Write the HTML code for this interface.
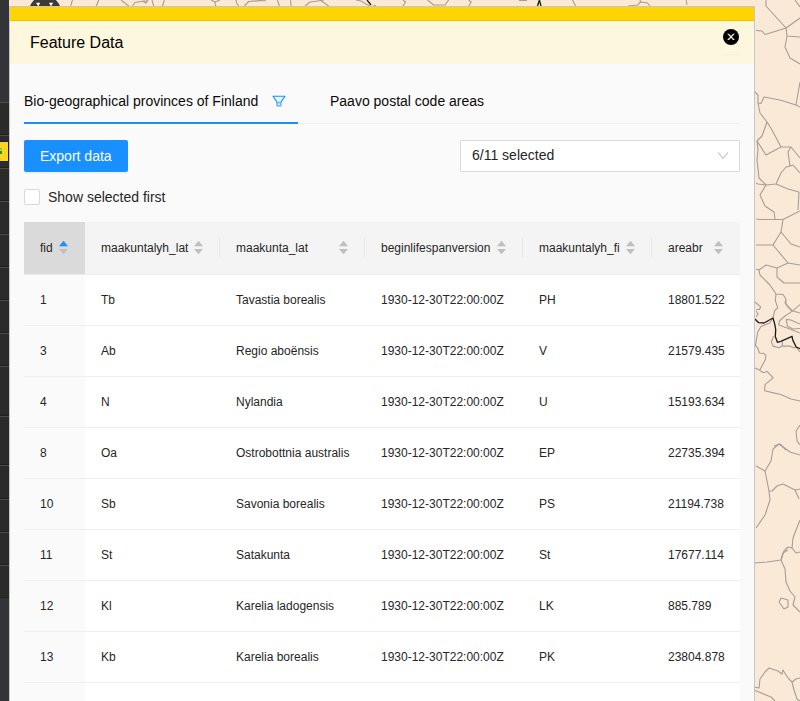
<!DOCTYPE html>
<html><head><meta charset="utf-8">
<style>
*{margin:0;padding:0;box-sizing:border-box}
html,body{width:800px;height:701px;overflow:hidden;background:#fae9d7;font-family:"Liberation Sans",sans-serif;color:#262626}
.a{position:absolute}
.t{position:absolute;white-space:nowrap;line-height:20px}
.f14{font-size:14px;color:#0a0a0a}
.f12{font-size:12px}
.dv{position:absolute;width:1px;height:19px;top:238px;background:#e6e6e6}
.hl{position:absolute;left:24px;width:716px;height:1px;background:#efefef}
</style></head><body>
<svg class="a" style="left:0;top:0" width="800" height="701" viewBox="0 0 800 701"><g fill="none" stroke="#a69e94" stroke-width="1.1" stroke-linejoin="round"><polyline points="766,0 766,6 786,28 800,18"/><polyline points="786,28 770,33 765,34.5 762,31 756,30.5"/><polyline points="786,28 787,36 800,37"/><polyline points="787,36 785,47 790,58 800,64"/><polyline points="795,0 800,7"/><polyline points="755,92 758,95 758,103 761,103.5 764,97 780,100 796,105 800,107"/><polyline points="796,105 800,82"/><polyline points="758,103 760,113 767,122"/><polyline points="767,122 762,136 757,141 766,155 781,147 791,147 788,152 790,166 793,165 800,173"/><polyline points="767,122 772,130 781,147"/><polyline points="791,147 800,158"/><polyline points="757,141 758,150 757,160 759,178 766,185 776,184 781,173 786,167 790,166"/><polyline points="756,183 758,184 766,185"/><polyline points="776,184 788,189 799,192"/><polyline points="766,185 760,195 765,206 774,212 775,219"/><polyline points="756,219 760,219.5 783,219.5 800,211"/><polyline points="799,192 798,210"/><polyline points="783,219.5 781,232 773,245 756,245"/><polyline points="781,232 791,244 800,247"/><polyline points="773,245 788,263 777,268 766,265 759,270 756,269"/><polyline points="788,263 800,265"/><polyline points="777,268 777,277 784,283 800,283"/><polyline points="759,270 760,275 770,285 776,294 783,294.5 786,299 785,303 792,310.7 800,313"/><polyline points="755,302 760.7,306.8 759.4,309.4 756,309.5"/><polyline points="756,316.7 758.1,314 756,311"/><polyline points="773.1,318 769.7,323 761,326.5 757.7,332 755.4,345.7 757.7,348 759.4,353 763.7,353.4 765.8,355.1 765.4,359.8 762,365.8 759.8,370.1"/><polyline points="778.8,325 779.4,321 785,316 792,311.4 800,304.6"/><polyline points="785.6,300 786.2,304.6 792,311.4"/><polyline points="778.8,325 788.5,328.5 800,333"/><polyline points="786.2,319.4 790.8,320 800,324"/><polyline points="786.2,319.4 787.4,326.3 793,329 800,328.5"/><polyline points="776,294 775.3,300.4 777.8,308.1 774.8,310.3 773.1,317.5"/><polyline points="773.5,336.3 771.4,341.8 773.1,346.1 779.1,347.8 782.1,346.1 782.5,341.8"/><polyline points="782.1,346.1 789.4,346.1 793.7,347.8 796,347 800,352"/><polyline points="755.1,368 759.4,370.1 763.3,372.7 767.1,371.4 773.1,377.8 765,384.7 764.6,390.7 771.4,392.4 780.8,394.5 791,399 800,401"/><polyline points="800,425 796,431 797,441 800,445"/><polyline points="774,446 780,444 786,450"/><polyline points="756,466 765,471 771,461 773,449 779,444 790,452 800,455"/><polyline points="765,471 769,491 770,500 765,515 756,528"/><polyline points="769,491 772,491 777,486 783,484 795,490 800,489"/><polyline points="795,490 799,499"/><polyline points="800,520 793,538 792,548 788,547 784,551 781,560"/><polyline points="792,548 796,553 800,552"/><polyline points="754,563 767,562 781,560 783,553 788,550"/><polyline points="781,560 785,569 786,582 790,591 795,597 793,605 800,612"/><polyline points="779,602 781,598 788,600 788,607 784,609 779,602"/><polyline points="754,687 759,688 760,679 765,672 769,668 778,671 782,674 783,670 786,675 789,679 792,682 796,679 800,678"/><polyline points="792,682 794,690 797,699 800,701"/><polyline points="754,690 771,697 775,701"/><polyline points="72.5,0 70.6,6"/><polyline points="98.8,0 96.2,6"/><polyline points="121,0 128.7,6"/><polyline points="132.5,6 135,2.5 142.5,1.2 146,3 147,0"/><polyline points="143.7,0 146,3 148,0"/><polyline points="152,0 153.7,6"/><polyline points="164.4,0 162.5,6"/><polyline points="211,0 215,2 220,0"/><polyline points="215,2 215.6,6"/><polyline points="236,0 236.5,3 238.7,6"/><polyline points="244.4,6 248.7,1.5 260,0.6 266,0.8"/><polyline points="277.5,0 279.4,6"/><polyline points="290.6,0 291,6"/><polyline points="305,6 310,2 317.5,1 324,0"/><polyline points="320,0 328.7,6"/><polyline points="356,0 361,1 365,3.5 370,6"/><polyline points="372.5,6 376,5.5"/><polyline points="403,0 405.6,2 403,6"/><polyline points="427.5,0 433.7,5 445,5 448.7,0"/><polyline points="468.7,0 471.2,2 468.7,6"/><polyline points="519,0.5 527,0.5"/><polyline points="572.5,0 575.6,6"/><polyline points="628,6 637.5,5 640.6,2 647.5,3 650,6"/><polyline points="640,0 640.6,2"/><polyline points="686.2,0 687,5"/></g><g fill="none" stroke="#1e1e1e" stroke-width="1.35" stroke-linejoin="round"><polyline points="755,319 758.6,322.7 764,323 773,318 774.8,324.4 775.7,329.5 775.3,336.4 777.4,342.3 780.8,341.4 792,336.3 792.8,340.1 796.2,347 800,348.7"/><polyline points="367,0 371,5"/><polyline points="537.5,6 539.4,0 541,6"/></g><circle cx="45" cy="11.7" r="16" fill="#3d3b38"/><path d="M36 2.8L40.2 2.8L38.3 6.5Z M49 2.8L53.2 2.8L51 6.5Z" fill="#fff"/></svg>
<!-- sidebar -->
<div class="a" style="left:0;top:0;width:9px;height:701px;background:#333438"></div>
<div class="a" style="left:0;top:102px;width:9px;height:496px;background:#2b2b29"></div><div class="a" style="left:0;top:597px;width:9px;height:1px;background:#222221"></div><div class="a" style="left:0;top:102px;width:9px;height:1px;background:#4b4b4a"></div><div class="a" style="left:0;top:134px;width:9px;height:1px;background:#202021"></div><div class="a" style="left:0;top:135px;width:9px;height:1px;background:#4b4b4a"></div><div class="a" style="left:0;top:167px;width:9px;height:1px;background:#202021"></div><div class="a" style="left:0;top:168px;width:9px;height:1px;background:#4b4b4a"></div><div class="a" style="left:0;top:200px;width:9px;height:1px;background:#202021"></div><div class="a" style="left:0;top:201px;width:9px;height:1px;background:#4b4b4a"></div><div class="a" style="left:0;top:233px;width:9px;height:1px;background:#202021"></div><div class="a" style="left:0;top:234px;width:9px;height:1px;background:#4b4b4a"></div><div class="a" style="left:0;top:266px;width:9px;height:1px;background:#202021"></div><div class="a" style="left:0;top:267px;width:9px;height:1px;background:#4b4b4a"></div><div class="a" style="left:0;top:299px;width:9px;height:1px;background:#202021"></div><div class="a" style="left:0;top:300px;width:9px;height:1px;background:#4b4b4a"></div><div class="a" style="left:0;top:332px;width:9px;height:1px;background:#202021"></div><div class="a" style="left:0;top:333px;width:9px;height:1px;background:#4b4b4a"></div><div class="a" style="left:0;top:365px;width:9px;height:1px;background:#202021"></div><div class="a" style="left:0;top:366px;width:9px;height:1px;background:#4b4b4a"></div><div class="a" style="left:0;top:415px;width:9px;height:1px;background:#202021"></div><div class="a" style="left:0;top:416px;width:9px;height:1px;background:#4b4b4a"></div><div class="a" style="left:0;top:464px;width:9px;height:1px;background:#202021"></div><div class="a" style="left:0;top:465px;width:9px;height:1px;background:#4b4b4a"></div><div class="a" style="left:0;top:498px;width:9px;height:1px;background:#202021"></div><div class="a" style="left:0;top:499px;width:9px;height:1px;background:#4b4b4a"></div><div class="a" style="left:0;top:531px;width:9px;height:1px;background:#202021"></div><div class="a" style="left:0;top:532px;width:9px;height:1px;background:#4b4b4a"></div><div class="a" style="left:0;top:564px;width:9px;height:1px;background:#202021"></div><div class="a" style="left:0;top:565px;width:9px;height:1px;background:#4b4b4a"></div><div class="a" style="left:0;top:141px;width:9px;height:21px;background:#1d2233"></div><div class="a" style="left:0;top:142px;width:8px;height:19px;background:#fdd520"></div><div class="a" style="left:0;top:148px;width:1.5px;height:2px;background:#8cc63f"></div><div class="a" style="left:0;top:151px;width:1.5px;height:3px;background:#2e8b22"></div>

<!-- modal -->
<div class="a" style="left:9px;top:6px;width:746px;height:700px;background:#c6c6ca"></div>
<div class="a" style="left:10px;top:7px;width:744px;height:700px;background:#fafafa"></div>
<div class="a" style="left:10px;top:7px;width:744px;height:14px;background:#ffd400"></div>
<div class="a" style="left:10px;top:20px;width:744px;height:1px;background:#ebc300"></div>
<div class="a" style="left:10px;top:21px;width:744px;height:43px;background:#fdf7dd"></div>
<div class="t" style="left:30px;top:33px;font-size:16px;color:#000">Feature Data</div>
<!-- close -->
<div class="a" style="left:723px;top:29px;width:16px;height:16px;border-radius:50%;background:#000"></div>
<svg class="a" style="left:723px;top:29px" width="16" height="16" viewBox="0 0 16 16"><path d="M4.1 4.8H5.98L11.9 10.9H10.02Z" fill="#efe9cf"/><path d="M11.9 4.8H10.02L4.1 10.9H5.98Z" fill="#efe9cf"/></svg>

<div class="a" style="left:723px;top:54px;width:16px;height:1px;background:#f6f0d4"></div>
<!-- tabs -->
<div class="t f14" style="left:24px;top:91px">Bio-geographical provinces of Finland</div>
<svg class="a" style="left:265px;top:88px" width="30" height="24" viewBox="0 0 30 24">
  <path d="M8 8.2H20L15.8 14.4H12.2Z" fill="#e6f7ff" stroke="#1890ff" stroke-width="1.05" stroke-linejoin="round"/>
  <path d="M12 14.6H15.9V17.4Q15.9 17.8 15.3 17.8H12.6Q12 17.8 12 17.4Z" fill="#fff" stroke="#6ab4ff" stroke-width="1.6"/>
</svg>
<div class="t f14" style="left:330px;top:91px">Paavo postal code areas</div>
<div class="hl" style="top:123px"></div>
<div class="a" style="left:24px;top:122px;width:274px;height:2px;background:#1890ff"></div>

<!-- export button -->
<div class="a" style="left:24px;top:140px;width:104px;height:32px;background:#1890ff;border-radius:2px;box-shadow:0 2px 0 rgba(0,0,0,.045)"></div>
<div class="t f14" style="left:40px;top:146px;color:#fff">Export data</div>
<!-- select -->
<div class="a" style="left:460px;top:140px;width:280px;height:32px;background:#fff;border:1px solid #d9d9d9;border-radius:2px"></div>
<div class="t f14" style="left:472px;top:145px;color:#262626">6/11 selected</div>
<svg class="a" style="left:716px;top:150px" width="14" height="12" viewBox="0 0 14 12"><path d="M2 2.5L7 8.5L12 2.5" fill="none" stroke="#bfbfbf" stroke-width="1.1"/></svg>
<!-- checkbox -->
<div class="a" style="left:24px;top:189px;width:16px;height:16px;background:#fff;border:1px solid #d9d9d9;border-radius:2px"></div>
<div class="t f14" style="left:48px;top:187px;color:#262626">Show selected first</div>

<!-- table header -->
<div class="a" style="left:24px;top:222px;width:716px;height:52px;background:#f4f4f4"></div>
<div class="a" style="left:24px;top:222px;width:61px;height:52px;background:#dadada"></div>
<div class="hl" style="top:274px;background:#ececec"></div>
<div class="a" style="left:24px;top:275px;width:61px;height:440px;background:#fafafa"></div>
<div class="a" style="left:85px;top:275px;width:655px;height:440px;background:#fff"></div>
<div class="dv" style="left:219px"></div>
<div class="dv" style="left:364px"></div>
<div class="dv" style="left:522px"></div>
<div class="dv" style="left:651px"></div>
<div class="t f12" style="left:40px;top:238px">fid</div>
<svg class="a" style="left:58px;top:239px" width="11" height="17" viewBox="0 0 11 17"><path d="M1 7.2L5.5 1.8L10 7.2Z" fill="#1890ff"/><path d="M1 10L5.5 15.2L10 10Z" fill="#bfbfbf"/></svg>
<div class="t f12" style="left:101px;top:238px">maakuntalyh_lat</div>
<svg class="a" style="left:193px;top:239px" width="11" height="17" viewBox="0 0 11 17"><path d="M1 7.2L5.5 1.8L10 7.2Z" fill="#bfbfbf"/><path d="M1 10L5.5 15.2L10 10Z" fill="#bfbfbf"/></svg>
<div class="t f12" style="left:236px;top:238px">maakunta_lat</div>
<svg class="a" style="left:338px;top:239px" width="11" height="17" viewBox="0 0 11 17"><path d="M1 7.2L5.5 1.8L10 7.2Z" fill="#bfbfbf"/><path d="M1 10L5.5 15.2L10 10Z" fill="#bfbfbf"/></svg>
<div class="t f12" style="left:381px;top:238px">beginlifespanversion</div>
<svg class="a" style="left:496px;top:239px" width="11" height="17" viewBox="0 0 11 17"><path d="M1 7.2L5.5 1.8L10 7.2Z" fill="#bfbfbf"/><path d="M1 10L5.5 15.2L10 10Z" fill="#bfbfbf"/></svg>
<div class="t f12" style="left:539px;top:238px">maakuntalyh_fi</div>
<svg class="a" style="left:625px;top:239px" width="11" height="17" viewBox="0 0 11 17"><path d="M1 7.2L5.5 1.8L10 7.2Z" fill="#bfbfbf"/><path d="M1 10L5.5 15.2L10 10Z" fill="#bfbfbf"/></svg>
<div class="t f12" style="left:668px;top:238px">areabr</div>
<svg class="a" style="left:713px;top:239px" width="11" height="17" viewBox="0 0 11 17"><path d="M1 7.2L5.5 1.8L10 7.2Z" fill="#bfbfbf"/><path d="M1 10L5.5 15.2L10 10Z" fill="#bfbfbf"/></svg>
<div class="t f12" style="left:40px;top:290px">1</div>
<div class="t f12" style="left:101px;top:290px">Tb</div>
<div class="t f12" style="left:236px;top:290px">Tavastia borealis</div>
<div class="t f12" style="left:381px;top:290px">1930-12-30T22:00:00Z</div>
<div class="t f12" style="left:539px;top:290px">PH</div>
<div class="t f12" style="left:668px;top:290px">18801.522</div>
<div class="hl" style="top:325px"></div>
<div class="t f12" style="left:40px;top:341px">3</div>
<div class="t f12" style="left:101px;top:341px">Ab</div>
<div class="t f12" style="left:236px;top:341px">Regio aboënsis</div>
<div class="t f12" style="left:381px;top:341px">1930-12-30T22:00:00Z</div>
<div class="t f12" style="left:539px;top:341px">V</div>
<div class="t f12" style="left:668px;top:341px">21579.435</div>
<div class="hl" style="top:376px"></div>
<div class="t f12" style="left:40px;top:392px">4</div>
<div class="t f12" style="left:101px;top:392px">N</div>
<div class="t f12" style="left:236px;top:392px">Nylandia</div>
<div class="t f12" style="left:381px;top:392px">1930-12-30T22:00:00Z</div>
<div class="t f12" style="left:539px;top:392px">U</div>
<div class="t f12" style="left:668px;top:392px">15193.634</div>
<div class="hl" style="top:427px"></div>
<div class="t f12" style="left:40px;top:443px">8</div>
<div class="t f12" style="left:101px;top:443px">Oa</div>
<div class="t f12" style="left:236px;top:443px">Ostrobottnia australis</div>
<div class="t f12" style="left:381px;top:443px">1930-12-30T22:00:00Z</div>
<div class="t f12" style="left:539px;top:443px">EP</div>
<div class="t f12" style="left:668px;top:443px">22735.394</div>
<div class="hl" style="top:478px"></div>
<div class="t f12" style="left:40px;top:494px">10</div>
<div class="t f12" style="left:101px;top:494px">Sb</div>
<div class="t f12" style="left:236px;top:494px">Savonia borealis</div>
<div class="t f12" style="left:381px;top:494px">1930-12-30T22:00:00Z</div>
<div class="t f12" style="left:539px;top:494px">PS</div>
<div class="t f12" style="left:668px;top:494px">21194.738</div>
<div class="hl" style="top:529px"></div>
<div class="t f12" style="left:40px;top:545px">11</div>
<div class="t f12" style="left:101px;top:545px">St</div>
<div class="t f12" style="left:236px;top:545px">Satakunta</div>
<div class="t f12" style="left:381px;top:545px">1930-12-30T22:00:00Z</div>
<div class="t f12" style="left:539px;top:545px">St</div>
<div class="t f12" style="left:668px;top:545px">17677.114</div>
<div class="hl" style="top:580px"></div>
<div class="t f12" style="left:40px;top:596px">12</div>
<div class="t f12" style="left:101px;top:596px">Kl</div>
<div class="t f12" style="left:236px;top:596px">Karelia ladogensis</div>
<div class="t f12" style="left:381px;top:596px">1930-12-30T22:00:00Z</div>
<div class="t f12" style="left:539px;top:596px">LK</div>
<div class="t f12" style="left:668px;top:596px">885.789</div>
<div class="hl" style="top:631px"></div>
<div class="t f12" style="left:40px;top:647px">13</div>
<div class="t f12" style="left:101px;top:647px">Kb</div>
<div class="t f12" style="left:236px;top:647px">Karelia borealis</div>
<div class="t f12" style="left:381px;top:647px">1930-12-30T22:00:00Z</div>
<div class="t f12" style="left:539px;top:647px">PK</div>
<div class="t f12" style="left:668px;top:647px">23804.878</div>
<div class="hl" style="top:682px"></div>
</body></html>
